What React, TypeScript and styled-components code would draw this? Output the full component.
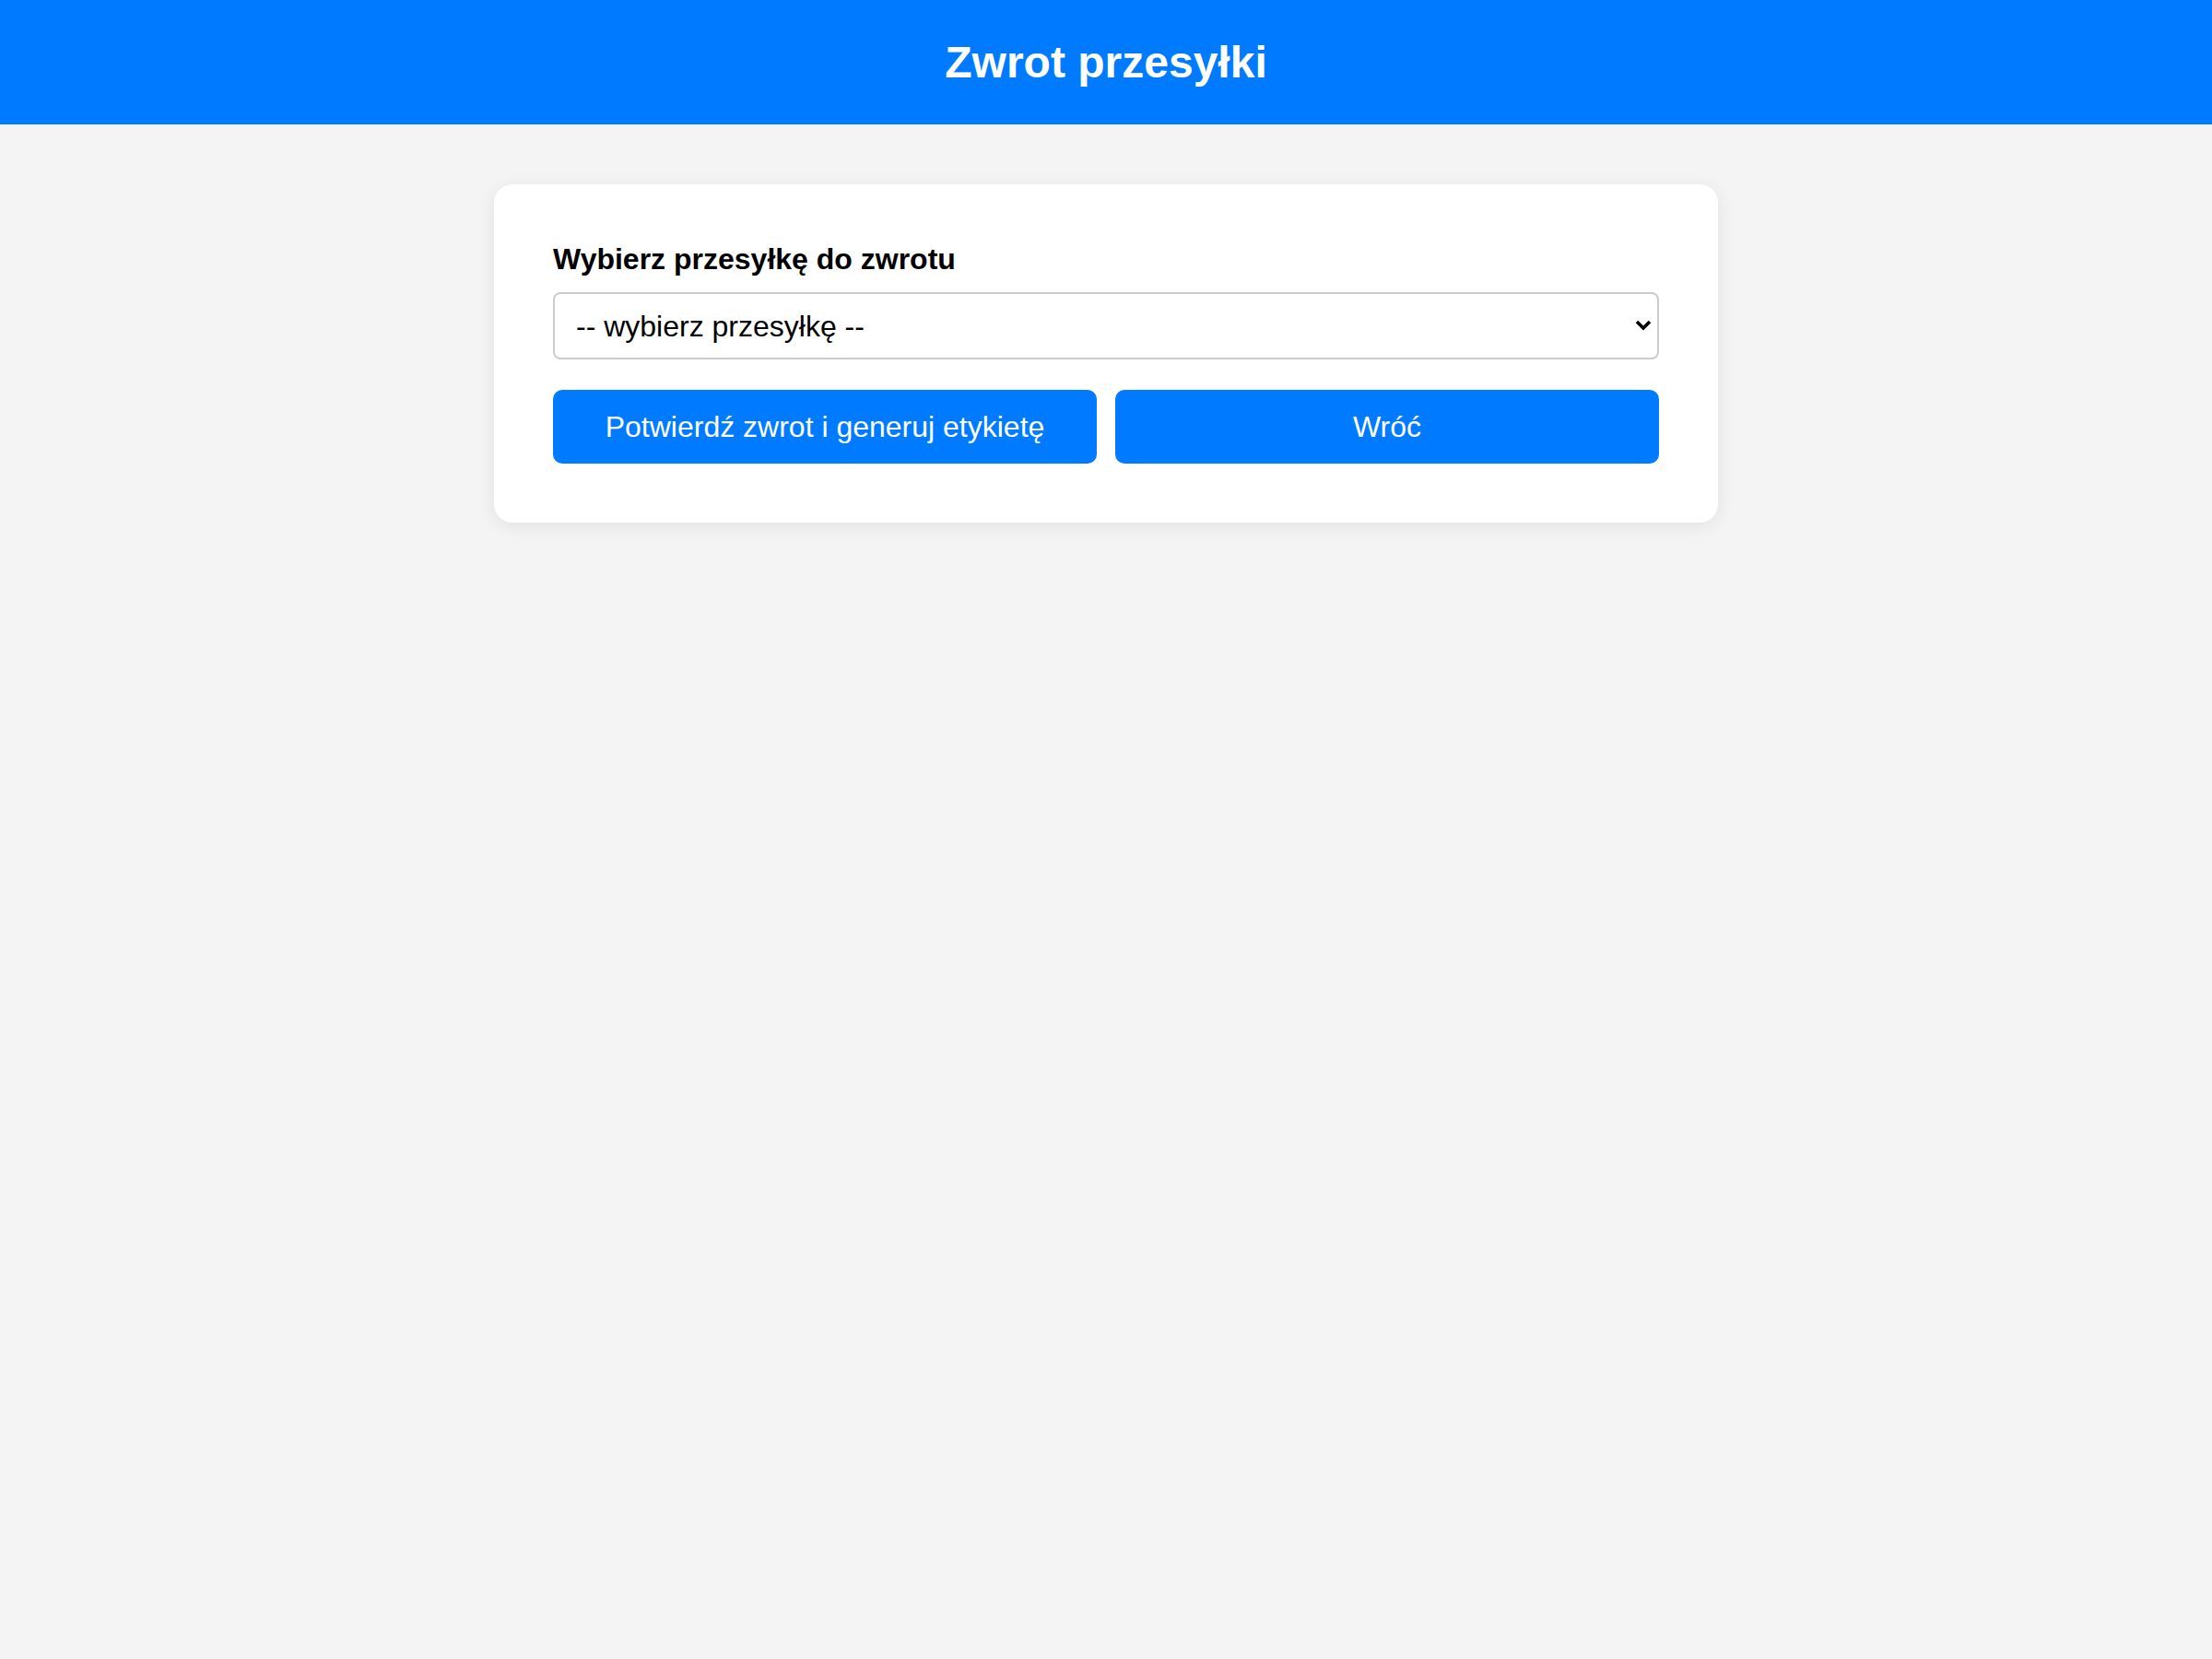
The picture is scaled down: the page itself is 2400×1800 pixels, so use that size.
import React, { useState } from "react";
import styled, { createGlobalStyle } from "styled-components";

const GlobalStyle = createGlobalStyle`
  html, body {
    margin: 0;
    padding: 0;
  }
  body {
    background: #f4f4f4;
    font-family: "Liberation Sans", Arial, sans-serif;
    color: #000;
  }
`;

export default function App() {
  const [shipment, setShipment] = useState("");

  return (
    <>
      <GlobalStyle />
      <Header>
        <Title>Zwrot przesyłki</Title>
      </Header>
      <Main>
        <Card>
          <Label htmlFor="shipment">Wybierz przesyłkę do zwrotu</Label>
          <SelectWrap>
            <Select
              id="shipment"
              value={shipment}
              onChange={(e) => setShipment(e.target.value)}
            >
              <option value="">-- wybierz przesyłkę --</option>
            </Select>
            <Chevron viewBox="0 0 18 12" aria-hidden="true">
              <path d="M2 2 L9 9 L16 2" fill="none" stroke="#000" strokeWidth="3.6" />
            </Chevron>
          </SelectWrap>
          <Actions>
            <ActionButton type="button">Potwierdź zwrot i generuj etykietę</ActionButton>
            <ActionButton type="button">Wróć</ActionButton>
          </Actions>
        </Card>
      </Main>
    </>
  );
}

const Header = styled.header`
  background: #007bff;
  color: #fff;
  padding: 40px;
  text-align: center;
`;
const Title = styled.h1`
  margin: 0;
  font-size: 48px;
  font-weight: bold;
  line-height: 55px;
`;
const Main = styled.main`
  padding: 65px 0;
`;
const Card = styled.div`
  box-sizing: border-box;
  width: 1328px;
  margin: 0 auto;
  background: #fff;
  border-radius: 20px;
  padding: 64px;
  box-shadow: 0 4px 20px rgba(0, 0, 0, 0.08);
`;
const Label = styled.label`
  display: block;
  font-size: 32px;
  font-weight: bold;
  line-height: 37px;
  margin-top: -1px;
  margin-bottom: 17px;
`;
const SelectWrap = styled.div`
  position: relative;
`;
const Select = styled.select`
  display: block;
  box-sizing: border-box;
  width: 100%;
  height: 73px;
  padding: 0 60px 0 23px;
  appearance: none;
  font-family: "Liberation Sans", Arial, sans-serif;
  font-size: 32px;
  color: #000;
  background: #fff;
  border: 2px solid #ccc;
  border-radius: 8px;
`;
const Chevron = styled.svg`
  position: absolute;
  right: 8px;
  top: 30px;
  width: 18px;
  height: 12px;
  pointer-events: none;
`;
const Actions = styled.div`
  display: flex;
  gap: 20px;
  margin-top: 33px;
`;
const ActionButton = styled.button`
  flex: 1;
  height: 80px;
  padding: 0 20px;
  border: none;
  border-radius: 10px;
  background: #007bff;
  color: #fff;
  font-family: "Liberation Sans", Arial, sans-serif;
  font-size: 32px;
  cursor: pointer;
`;
